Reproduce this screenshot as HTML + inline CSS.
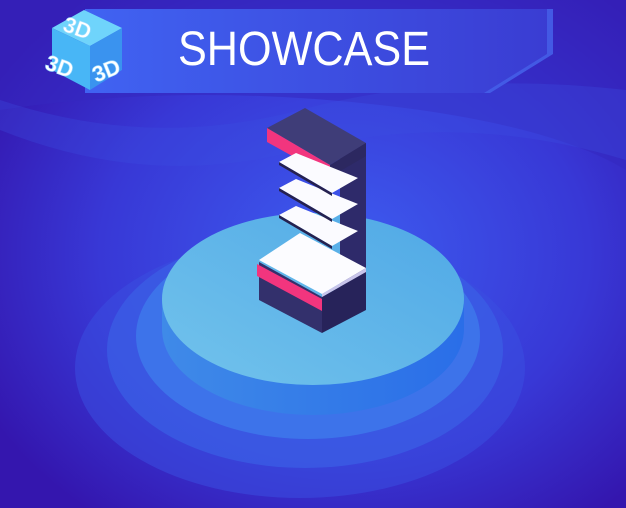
<!DOCTYPE html>
<html><head><meta charset="utf-8"><style>
html,body{margin:0;padding:0;width:626px;height:508px;overflow:hidden;background:#3519b0}
svg{display:block}
</style></head><body>
<svg width="626" height="508" viewBox="0 0 626 508" xmlns="http://www.w3.org/2000/svg">
<defs>
<radialGradient id="bg" cx="0.55" cy="0.5" r="0.65">
<stop offset="0" stop-color="#3d5cf0"/><stop offset="0.6" stop-color="#3838d6"/><stop offset="1" stop-color="#3416ae"/>
</radialGradient>
<linearGradient id="ban" x1="0" x2="1"><stop offset="0" stop-color="#4063f2"/><stop offset="1" stop-color="#3a3cd2"/></linearGradient>
<linearGradient id="top" x1="0" y1="1" x2="1" y2="0"><stop offset="0" stop-color="#72c3ec"/><stop offset="1" stop-color="#4fa8e6"/></linearGradient>
<linearGradient id="side" x1="0" x2="1"><stop offset="0" stop-color="#3f8ae8"/><stop offset="1" stop-color="#2a6ee8"/></linearGradient>
</defs>
<rect width="626" height="508" fill="url(#bg)"/>
<path d="M0 110 Q200 80 420 110 Q560 130 626 170 L626 0 L0 0Z" fill="#3428c0" opacity="0.55"/>
<path d="M0 130 Q150 190 300 150 Q460 110 626 160 L626 90 Q450 70 300 110 Q150 150 0 100Z" fill="#3d4ee0" opacity="0.3"/>
<ellipse cx="300" cy="368" rx="225" ry="130" fill="#3a4ee0" opacity="0.55"/>
<ellipse cx="305" cy="350" rx="198" ry="118" fill="#3a5fe6" opacity="0.7"/>
<ellipse cx="308" cy="336" rx="172" ry="103" fill="#3d73ea"/>
<path d="M162 299 L162 329 A151 86 0 0 0 464 329 L464 299Z" fill="url(#side)"/>
<ellipse cx="313" cy="299" rx="151" ry="86" fill="url(#top)"/>
<polygon points="340,152 366,143 366,300 340,312" fill="#2e2a6a"/>
<polygon points="267,128 305,108 366,143 330,165" fill="#3f3d78"/>
<polygon points="267,128 330,165 330,177 267,142" fill="#f2357e"/>
<polygon points="330,165 366,143 366,156 330,177" fill="#2c2860"/>
<g fill="#fbfbff">
<polygon points="279,162 296,153 358,178 332,193"/>
<polygon points="279,188 296,179 358,204 332,219"/>
<polygon points="279,215 296,206 358,231 332,246"/>
</g>
<g fill="#25214f">
<polygon points="279,162 332,193 332,196 279,165"/>
<polygon points="279,188 332,219 332,222 279,191"/>
<polygon points="279,215 332,246 332,249 279,218"/>
</g>
<polygon points="259,262 322,297 322,333 259,300" fill="#33306c"/>
<polygon points="322,297 366,272 366,310 322,333" fill="#27235a"/>
<polygon points="259,260 300,233 366,268 322,294" fill="#fcfcff"/>
<polygon points="259,260 322,294 322,297 366,272 366,268 322,294" fill="#c8c4ea"/>
<polygon points="257,264 322,299 322,311 257,276" fill="#f2357e"/>
<polygon points="85,9 553,9 553,54 490,93 85,93" fill="url(#ban)"/>
<polygon points="547,9 553,9 553,54 490,93 484,93 547,54" fill="#4a6cf0" opacity="0.6"/>
<text x="178" y="65" textLength="252" lengthAdjust="spacingAndGlyphs" font-family="Liberation Sans, sans-serif" font-size="48" fill="#fff">SHOWCASE</text>
<polygon points="52,28 84,10 122,28 90,46" fill="#6fd4fb"/>
<polygon points="52,28 90,46 90,90 52,70" fill="#48b6f6"/>
<polygon points="90,46 122,28 122,70 90,90" fill="#3a93ef"/>
<g font-family="Liberation Sans, sans-serif" font-weight="bold" fill="#fff" stroke="#9fdcff" stroke-width="0.6">
<text x="64" y="35" font-size="22" transform="rotate(20 76 26)">3D</text>
<text x="46" y="74" font-size="22" transform="rotate(20 60 65)">3D</text>
<text x="92" y="78" font-size="22" transform="rotate(-22 106 70)">3D</text>
</g>
</svg>
</body></html>
